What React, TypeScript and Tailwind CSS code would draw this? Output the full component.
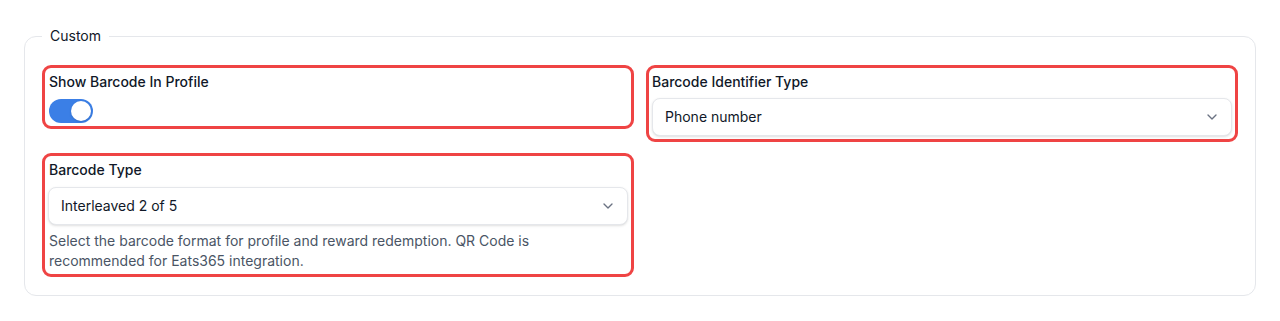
import { ChevronDown } from "lucide-react";

function SelectField({ value }: { value: string }) {
  return (
    <div className="relative">
      <select
        defaultValue={value}
        className="h-[38px] w-full appearance-none rounded-lg border border-gray-200 bg-white px-3 text-sm text-gray-900 shadow-sm outline-none"
      >
        <option value={value}>{value}</option>
      </select>
      <ChevronDown
        className="pointer-events-none absolute right-3 top-1/2 h-4 w-4 -translate-y-1/2 text-gray-500"
        strokeWidth={2}
      />
    </div>
  );
}

function Highlight({ children }: { children: React.ReactNode }) {
  return (
    <div className="rounded-[9px] border-[3px] border-[#ef4444] px-[3px] pb-[3px] pt-[4px]">
      {children}
    </div>
  );
}

export default function App() {
  return (
    <div
      className="min-h-[321px] bg-white px-6 pt-[26px] text-gray-900"
      style={{ fontFamily: "Inter, 'Noto Sans', sans-serif" }}
    >
      <fieldset className="rounded-xl border border-gray-200 px-[17px] pb-[18px] pt-[19px]">
        <legend className="px-2 text-sm leading-5 text-gray-900">Custom</legend>

        <div className="grid grid-cols-2 items-start gap-x-3 gap-y-[11px]">
          <Highlight>
            <label className="block pl-px text-sm font-medium leading-5 text-gray-900">
              Show Barcode In Profile
            </label>
            <div className="mt-[7px] flex pl-px">
              <button
                type="button"
                role="switch"
                aria-checked="true"
                className="flex h-6 w-11 items-center justify-end rounded-full bg-[#3b7fe6] px-0.5"
              >
                <span className="h-5 w-5 rounded-full bg-white shadow-sm" />
              </button>
            </div>
          </Highlight>

          <Highlight>
            <label className="block text-sm font-medium leading-5 text-gray-900">
              Barcode Identifier Type
            </label>
            <div className="mt-[6px]">
              <SelectField value="Phone number" />
            </div>
          </Highlight>

          <Highlight>
            <label className="block pl-px text-sm font-medium leading-5 text-gray-900">
              Barcode Type
            </label>
            <div className="mt-[7px]">
              <SelectField value="Interleaved 2 of 5" />
            </div>
            <p className="mt-1.5 max-w-lg pl-px text-sm leading-5 text-gray-600">
              Select the barcode format for profile and reward redemption. QR
              Code is recommended for Eats365 integration.
            </p>
          </Highlight>
        </div>
      </fieldset>
    </div>
  );
}
